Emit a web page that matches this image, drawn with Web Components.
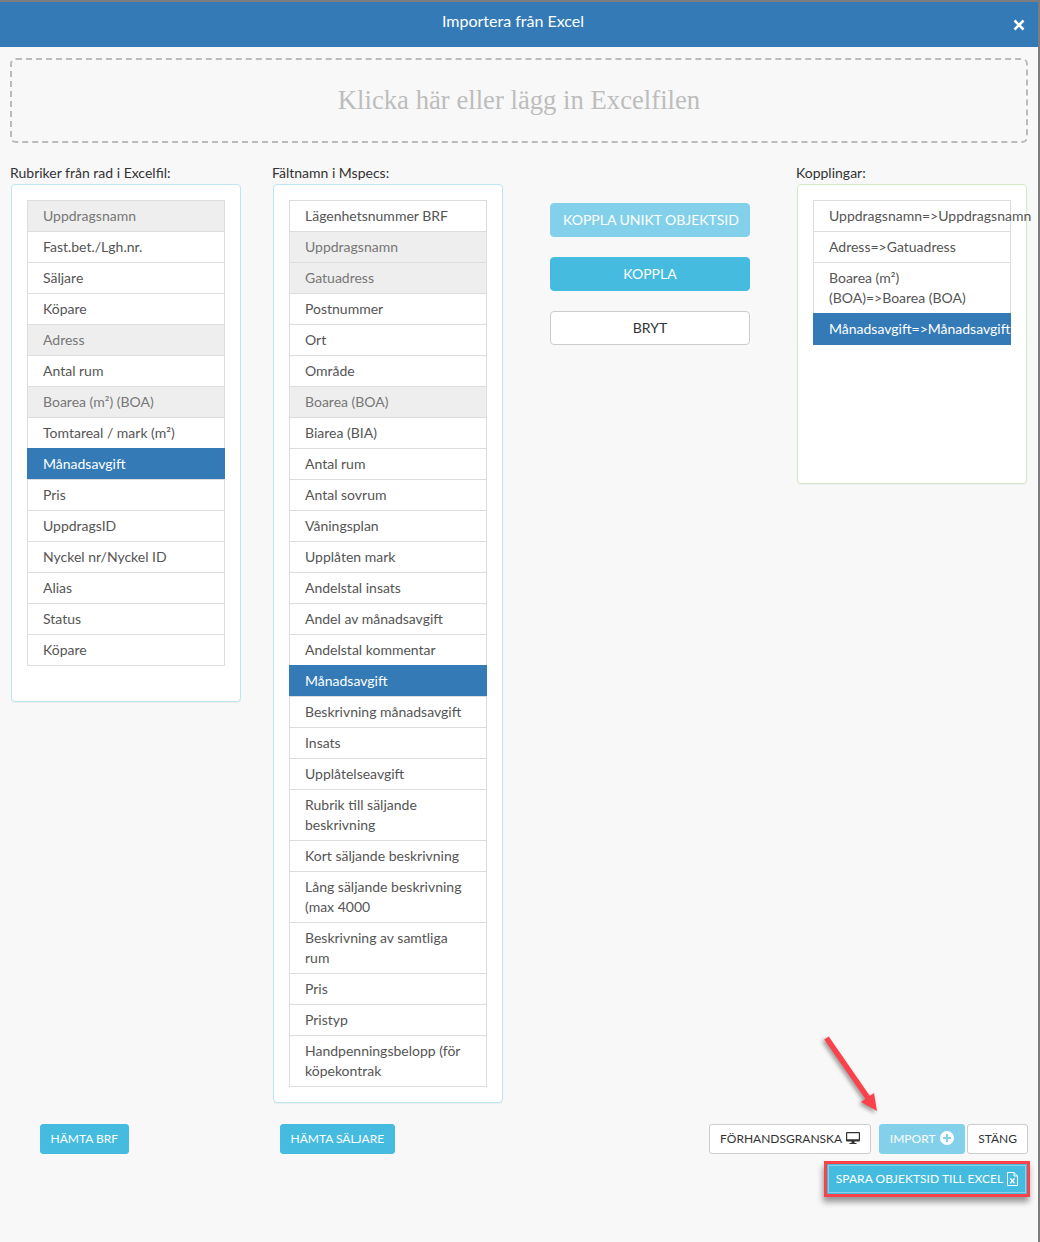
<!DOCTYPE html>
<html lang="sv"><head><meta charset="utf-8"><title>Importera från Excel</title>
<style>html,body{margin:0;padding:0;background:#f8f8f8;}body{font:14px/20px Lato,"Liberation Sans",sans-serif;color:#333;}</style></head>
<body>
<import-modal>
<modal-head slot="head">Importera från Excel</modal-head>
<drop-zone slot="drop">Klicka här eller lägg in Excelfilen</drop-zone>

<list-panel slot="c1" label="Rubriker från rad i Excelfil:" tint="#bde6f0" roomy>
<list-row mark="used">Uppdragsnamn</list-row><list-row>Fast.bet./Lgh.nr.</list-row><list-row>Säljare</list-row><list-row>Köpare</list-row><list-row mark="used">Adress</list-row><list-row>Antal rum</list-row><list-row mark="used">Boarea (m²) (BOA)</list-row><list-row>Tomtareal / mark (m²)</list-row><list-row mark="active">Månadsavgift</list-row><list-row>Pris</list-row><list-row>UppdragsID</list-row><list-row>Nyckel nr/Nyckel ID</list-row><list-row>Alias</list-row><list-row>Status</list-row><list-row>Köpare</list-row>
</list-panel>

<list-panel slot="c2" label="Fältnamn i Mspecs:" tint="#bde6f0">
<list-row>Lägenhetsnummer BRF</list-row><list-row mark="used">Uppdragsnamn</list-row><list-row mark="used">Gatuadress</list-row><list-row>Postnummer</list-row><list-row>Ort</list-row><list-row>Område</list-row><list-row mark="used">Boarea (BOA)</list-row><list-row>Biarea (BIA)</list-row><list-row>Antal rum</list-row><list-row>Antal sovrum</list-row><list-row>Våningsplan</list-row><list-row>Upplåten mark</list-row><list-row>Andelstal insats</list-row><list-row>Andel av månadsavgift</list-row><list-row>Andelstal kommentar</list-row><list-row mark="active">Månadsavgift</list-row><list-row>Beskrivning månadsavgift</list-row><list-row>Insats</list-row><list-row>Upplåtelseavgift</list-row><list-row>Rubrik till säljande beskrivning</list-row><list-row>Kort säljande beskrivning</list-row><list-row>Lång säljande beskrivning (max 4000</list-row><list-row>Beskrivning av samtliga rum</list-row><list-row>Pris</list-row><list-row>Pristyp</list-row><list-row>Handpenningsbelopp (för köpekontrak</list-row>
</list-panel>

<action-stack slot="c3">
<ui-btn kind="info" dim wide>KOPPLA UNIKT OBJEKTSID</ui-btn>
<ui-btn kind="info" wide>KOPPLA</ui-btn>
<ui-btn wide>BRYT</ui-btn>
</action-stack>

<list-panel slot="c4" label="Kopplingar:" tint="#d5eac8" tall>
<list-row>Uppdragsnamn=&gt;Uppdragsnamn</list-row><list-row>Adress=&gt;Gatuadress</list-row><list-row>Boarea (m²) (BOA)=&gt;Boarea (BOA)</list-row><list-row mark="active">Månadsavgift=&gt;Månadsavgift</list-row>
</list-panel>

<ui-btn slot="brf" kind="info" small tight>HÄMTA BRF</ui-btn>
<ui-btn slot="seller" kind="info" small tight>HÄMTA SÄLJARE</ui-btn>
<ui-btn slot="right" small>FÖRHANDSGRANSKA <svg width="14" height="12" viewBox="0 0 14 12" style="vertical-align:-1px;margin-left:1px"><path fill="#333" fill-rule="evenodd" d="M1 0h12a1 1 0 0 1 1 1v7.500a1 1 0 0 1-1 1H8.500V11h2v1h-7v-1h2V9.500H1a1 1 0 0 1-1-1V1a1 1 0 0 1 1-1zM1.200 1.200v6h11.600v-6z"/></svg></ui-btn>
<ui-btn slot="right" kind="info" dim small style="margin-left:8px">IMPORT <svg width="14" height="14" viewBox="0 0 14 14" style="vertical-align:-2px;margin-left:2px"><path fill="#fff" fill-rule="evenodd" d="M7 0a7 7 0 1 1 0 14A7 7 0 0 1 7 0zM6 3v3H3v2h3v3h2V8h3V6H8V3z"/></svg></ui-btn>
<ui-btn slot="right" small style="margin-left:2px">STÄNG</ui-btn>
<ui-btn slot="save" kind="info" small highlight>SPARA OBJEKTSID TILL EXCEL <svg width="11" height="14" viewBox="0 0 11 14" style="vertical-align:-3px;margin-left:1px"><path fill="none" stroke="#fff" d="M.5.5h6.500l3.500 3.500v9.500H.5zM7 .5V4h3.500"/><path fill="none" stroke="#fff" stroke-width="1.400" d="M3.300 6.400l4.200 5M7.500 6.400l-4.200 5"/></svg></ui-btn>
<red-arrow slot="arrow"></red-arrow>
</import-modal>

<script>
const el=(name,css,html,init)=>customElements.define(name,class extends HTMLElement{
  constructor(){super();this.attachShadow({mode:'open'}).innerHTML='<style>'+css+'</style>'+html;}
  connectedCallback(){init&&init(this);}
});
el('import-modal',`
:host{display:block;position:relative;width:1040px;height:1242px;overflow:hidden;background:#f8f8f8;box-sizing:border-box;border-top:2px solid #7d7d7d;border-right:2px solid #7d7d7d}
.drop{display:block;padding:11px 10px 0 10px}
.cols{display:grid;grid-template-columns:262px 262px 262px 230px;padding:20px 0 0 11px;align-items:start}
.foot{display:flex;align-items:flex-start;padding:21px 10px 0 40px}
.foot .l1{width:240px}
.foot .r{margin-left:auto;display:flex}
.save{display:flex;justify-content:flex-end;padding:10px 11px 0 0}
`,`<slot name="head"></slot><div class="drop"><slot name="drop"></slot></div>
<div class="cols"><div><slot name="c1"></slot></div><div><slot name="c2"></slot></div><div><slot name="c3"></slot></div><div><slot name="c4"></slot></div></div>
<div class="foot"><div class="l1"><slot name="brf"></slot></div><div><slot name="seller"></slot></div><div class="r"><slot name="right"></slot></div></div>
<div class="save"><slot name="save"></slot></div><slot name="arrow"></slot>`);
el('modal-head',`
:host{display:flex;justify-content:center;position:relative;height:45px;background:#337ab7;color:#fff;font-size:16px;line-height:20px;box-sizing:border-box;padding:9px 12px 0 0}
.x{position:absolute;right:13px;top:17px;width:12px;height:12px}`,
`<slot></slot><svg class="x" viewBox="0 0 12 12"><path d="M1.500 1.500l9 9M10.500 1.500l-9 9" stroke="#fff" stroke-width="2.600" fill="none"/></svg>`);
el('drop-zone',`
:host{display:flex;height:85px;box-sizing:border-box;border:2px dashed #bbb;border-radius:6px;padding-bottom:2px;align-items:center;justify-content:center;font:26.700px/32px "Liberation Serif",serif;color:#bdbdbd}`,`<slot></slot>`);
el('list-panel',`
:host{display:block;width:230px}
.lab{margin:0 0 0 -1px;height:21px;line-height:20px;color:#333}
.p{background:#fff;border:1px solid var(--t);border-radius:4px;box-sizing:border-box;padding:15px;box-shadow:0 1px 1px rgba(0,0,0,.05)}
:host([roomy]) .p{padding-bottom:35px}
:host([tall]) .p{height:300px}`,
`<div class="lab"></div><div class="p"><slot></slot></div>`,
h=>{h.shadowRoot.querySelector('.lab').textContent=h.getAttribute('label');h.style.setProperty('--t',h.getAttribute('tint'));});
el('list-row',`
:host{display:block;background:#fff;border:1px solid #ddd;padding:5px 15px;margin-bottom:-1px;color:#555;line-height:20px;box-sizing:border-box;width:198px}
:host([mark=used]){background:#eee;color:#777}
:host([mark=active]){background:#337ab7;border-color:#337ab7;color:#fff}
:host(:last-child){margin-bottom:0}`,`<slot></slot>`);
el('action-stack',`
:host{display:flex;flex-direction:column;gap:20px;padding:40px 0 0 15px;width:200px}`,`<slot></slot>`);
el('ui-btn',`
:host{display:inline-block;box-sizing:border-box;height:34px;padding:6px 12px;border:1px solid #ccc;border-radius:4px;background:#fff;color:#333;font-size:14px;line-height:20px;text-align:center;white-space:nowrap}
:host([wide]){display:block;width:200px}
:host([small]){height:30px;padding:5px 10px;font-size:12px;line-height:18px;border-radius:3px}
:host([tight]){padding:5px 9.500px}
:host([kind=info]){background:#44bbdf;border-color:#44bbdf;color:#fff}
:host([dim]){background:#82d0e9;border-color:#82d0e9}
:host([highlight]){padding:5px 8px;letter-spacing:.04px;outline:3px solid #fb414a;box-shadow:inset 0 0 0 1px rgba(255,255,255,.35),-1px 5px 6px 3px rgba(0,0,0,.4);border-radius:0}`,`<slot></slot>`);
el('red-arrow',`:host{position:absolute;left:820px;top:1028px;width:64px;height:90px}svg{display:block;overflow:visible}`,
`<svg width="64" height="90" viewBox="0 0 64 90"><g style="filter:drop-shadow(-2px 2px 2px rgba(0,0,0,.4))"><path d="M6.500 8L48 68" stroke="#fb414a" stroke-width="5.500" fill="none"/><path d="M57 81L41 72l13-9z" fill="#fb414a"/></g></svg>`);
</script>
</body></html>
